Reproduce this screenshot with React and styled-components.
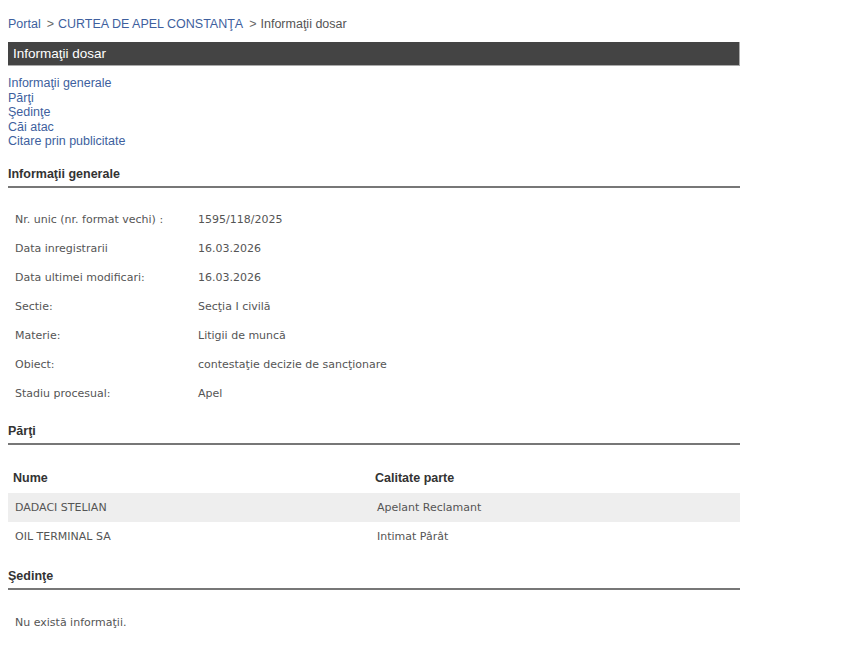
import React from "react";
import styled, { createGlobalStyle } from "styled-components";

const Global = createGlobalStyle`
  html, body { margin: 0; padding: 0; background: #fff; }
  body { font-family: "Liberation Sans", Arial, sans-serif; }
`;

const Page = styled.div`
  width: 732px;
  padding: 17px 0 20px 8px;
`;

const Crumbs = styled.div`
  font-size: 12.5px;
  color: #555;
  line-height: 15px;
  margin-bottom: 10px;
`;

const Link = styled.a`
  color: #3e5f9e;
  text-decoration: none;
`;

const Sep = styled.span`
  color: #666;
  margin: 0 4px 0 6px;
`;

const TitleBar = styled.div`
  background: #444;
  border: 1px solid #aaa;
  border-left: none;
  border-top: none;
  color: #fff;
  font-size: 13.5px;
  height: 23px;
  line-height: 23px;
  padding-left: 5px;
`;

const Nav = styled.nav`
  display: flex;
  flex-direction: column;
  margin-top: 10px;
  font-size: 12.5px;
  line-height: 14.5px;
`;

const SectionTitle = styled.h3`
  margin: ${(p) => p.$mt}px 0 0 0;
  font-size: 12.5px;
  font-weight: bold;
  color: #333;
  padding-bottom: 4px;
  border-bottom: 2px solid #777;
  line-height: 15px;
`;

const InfoTable = styled.table`
  border-collapse: collapse;
  margin-top: ${(p) => p.$mt}px;
  width: 100%;
  font-family: "DejaVu Sans", Verdana, sans-serif;
  font-size: 11px;
  color: #555;
`;

const Label = styled.td`
  width: 183px;
  padding: 0 0 0 7px;
  height: 29px;
  vertical-align: middle;
`;

const Value = styled.td`
  padding: 0;
  vertical-align: middle;
`;

const HeadCell = styled.th`
  text-align: left;
  font-family: "Liberation Sans", Arial, sans-serif;
  font-size: 12.5px;
  font-weight: bold;
  color: #333;
  height: 30px;
  padding: 0 0 0 ${(p) => p.$pl}px;
  width: ${(p) => p.$w || "auto"};
`;

const Row = styled.tr`
  background: ${(p) => (p.$shade ? "#eee" : "transparent")};
`;

const Cell = styled.td`
  height: 29px;
  padding: 0 0 0 7px;
  vertical-align: middle;
`;

const Empty = styled.p`
  margin: 26px 0 0 7px;
  font-family: "DejaVu Sans", Verdana, sans-serif;
  font-size: 11px;
  color: #555;
`;

const info = [
  ["Nr. unic (nr. format vechi) :", "1595/118/2025"],
  ["Data inregistrarii", "16.03.2026"],
  ["Data ultimei modificari:", "16.03.2026"],
  ["Sectie:", "Secţia I civilă"],
  ["Materie:", "Litigii de muncă"],
  ["Obiect:", "contestaţie decizie de sancţionare"],
  ["Stadiu procesual:", "Apel"],
];

const parti = [
  ["DADACI STELIAN", "Apelant Reclamant"],
  ["OIL TERMINAL SA", "Intimat Pârât"],
];

export default function App() {
  return (
    <>
      <Global />
      <Page>
        <Crumbs>
          <Link href="#">Portal</Link>
          <Sep>&gt;</Sep>
          <Link href="#">CURTEA DE APEL CONSTANŢA</Link>
          <Sep>&gt;</Sep>
          Informaţii dosar
        </Crumbs>
        <TitleBar>Informaţii dosar</TitleBar>
        <Nav>
          <Link href="#">Informaţii generale</Link>
          <Link href="#">Părţi</Link>
          <Link href="#">Şedinţe</Link>
          <Link href="#">Căi atac</Link>
          <Link href="#">Citare prin publicitate</Link>
        </Nav>
        <SectionTitle $mt={18}>Informaţii generale</SectionTitle>
        <InfoTable $mt={17}>
          <tbody>
            {info.map(([l, v]) => (
              <tr key={l}>
                <Label>{l}</Label>
                <Value>{v}</Value>
              </tr>
            ))}
          </tbody>
        </InfoTable>
        <SectionTitle $mt={16}>Părţi</SectionTitle>
        <InfoTable $mt={18}>
          <thead>
            <tr>
              <HeadCell $pl={5} $w="357px">Nume</HeadCell>
              <HeadCell $pl={5}>Calitate parte</HeadCell>
            </tr>
          </thead>
          <tbody>
            {parti.map(([n, c], i) => (
              <Row key={n} $shade={i === 0}>
                <Cell>{n}</Cell>
                <Cell>{c}</Cell>
              </Row>
            ))}
          </tbody>
        </InfoTable>
        <SectionTitle $mt={18}>Şedinţe</SectionTitle>
        <Empty>Nu există informaţii.</Empty>
      </Page>
    </>
  );
}
